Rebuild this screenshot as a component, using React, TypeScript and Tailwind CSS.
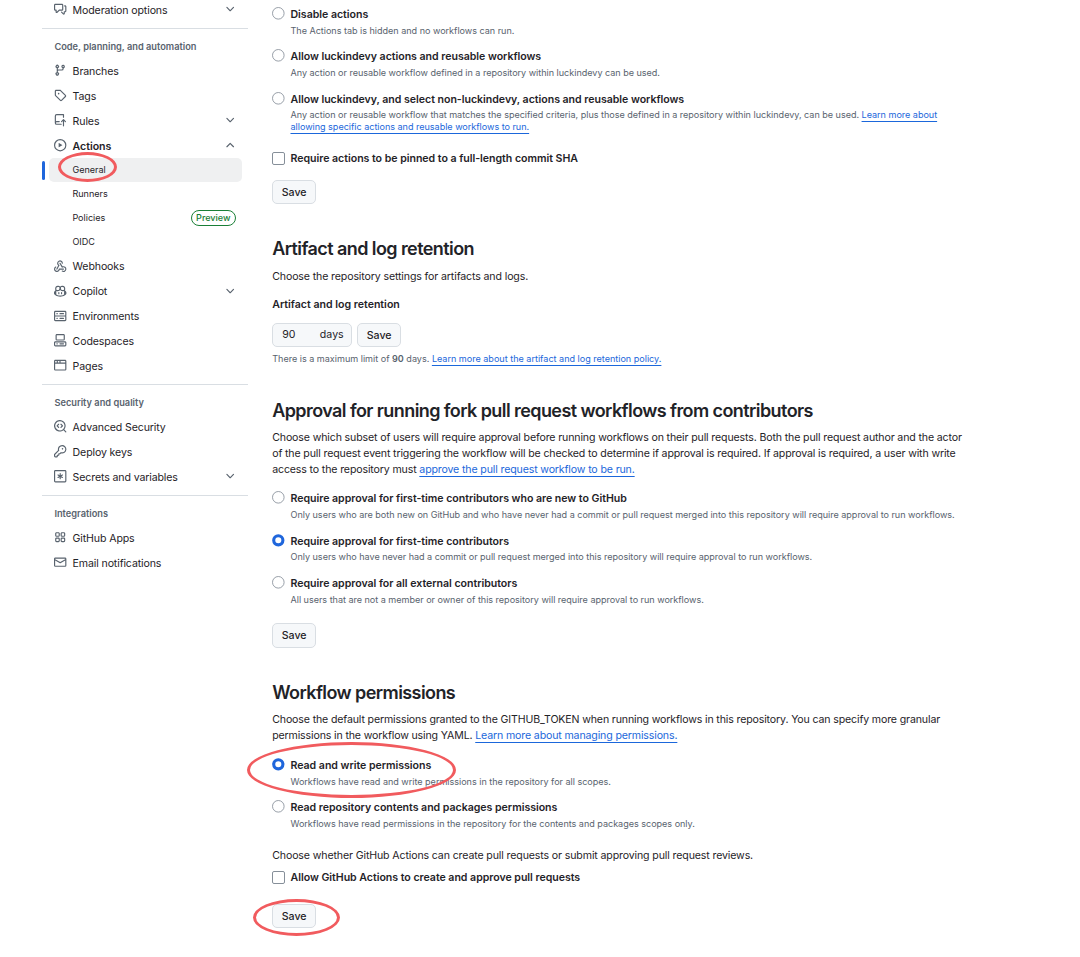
import type { ReactNode } from "react"

const icons = {
  discussion:
    "M1.75 1h8.5c.966 0 1.75.784 1.75 1.75v5.5A1.75 1.75 0 0 1 10.25 10H7.061l-2.574 2.573A1.458 1.458 0 0 1 2 11.543V10h-.25A1.75 1.75 0 0 1 0 8.25v-5.5C0 1.784.784 1 1.75 1ZM1.5 2.75v5.5c0 .138.112.25.25.25h1a.75.75 0 0 1 .75.75v2.19l2.72-2.72a.749.749 0 0 1 .53-.22h3.5a.25.25 0 0 0 .25-.25v-5.5a.25.25 0 0 0-.25-.25h-8.5a.25.25 0 0 0-.25.25Zm13 2a.25.25 0 0 0-.25-.25h-.5a.75.75 0 0 1 0-1.5h.5c.966 0 1.75.784 1.75 1.75v5.5A1.75 1.75 0 0 1 14.25 12H14v1.543a1.458 1.458 0 0 1-2.487 1.03L9.22 12.28a.749.749 0 0 1 .326-1.275.749.749 0 0 1 .734.215l2.22 2.22v-2.19a.75.75 0 0 1 .75-.75h1a.25.25 0 0 0 .25-.25Z",
  branch:
    "M9.5 3.25a2.25 2.25 0 1 1 3 2.122V6A2.5 2.5 0 0 1 10 8.5H6a1 1 0 0 0-1 1v1.128a2.251 2.251 0 1 1-1.5 0V5.372a2.25 2.25 0 1 1 1.5 0v1.836A2.493 2.493 0 0 1 6 7h4a1 1 0 0 0 1-1v-.628A2.25 2.25 0 0 1 9.5 3.25Zm-6 0a.75.75 0 1 0 1.5 0 .75.75 0 0 0-1.5 0Zm8.25-.75a.75.75 0 1 0 0 1.5.75.75 0 0 0 0-1.5ZM4.25 12a.75.75 0 1 0 0 1.5.75.75 0 0 0 0-1.5Z",
  tag: "M1 7.775V2.75C1 1.784 1.784 1 2.75 1h5.025c.464 0 .91.184 1.238.513l6.25 6.25a1.75 1.75 0 0 1 0 2.474l-5.026 5.026a1.75 1.75 0 0 1-2.474 0l-6.25-6.25A1.752 1.752 0 0 1 1 7.775Zm1.5 0c0 .066.026.13.073.177l6.25 6.25a.25.25 0 0 0 .354 0l5.025-5.025a.25.25 0 0 0 0-.354l-6.25-6.25a.25.25 0 0 0-.177-.073H2.75a.25.25 0 0 0-.25.25ZM6 5a1 1 0 1 1 0 2 1 1 0 0 1 0-2Z",
  repoPush:
    "M1 2.5A2.5 2.5 0 0 1 3.5 0h8.75a.75.75 0 0 1 .75.75v3.5a.75.75 0 0 1-1.5 0V1.5h-8a1 1 0 0 0-1 1v6.708A2.493 2.493 0 0 1 3.5 9h3.25a.75.75 0 0 1 0 1.5H3.5a1 1 0 0 0 0 2h5.75a.75.75 0 0 1 0 1.5H3.5A2.5 2.5 0 0 1 1 11.5ZM12.78 6.72l2.5 2.5a.75.75 0 0 1-1.06 1.06l-1.22-1.22v6.19a.75.75 0 0 1-1.5 0V9.06l-1.22 1.22a.75.75 0 0 1-1.06-1.06l2.5-2.5a.75.75 0 0 1 1.06 0Z",
  play: "M8 0a8 8 0 1 1 0 16A8 8 0 0 1 8 0ZM1.5 8a6.5 6.5 0 1 0 13 0 6.5 6.5 0 0 0-13 0Zm4.879-2.773 4.264 2.559a.25.25 0 0 1 0 .428l-4.264 2.559A.25.25 0 0 1 6 10.559V5.442a.25.25 0 0 1 .379-.215Z",
  webhook:
    "M5.5 4.25a2.25 2.25 0 0 1 4.5 0 .75.75 0 0 0 1.5 0 3.75 3.75 0 1 0-6.14 2.889l-2.272 4.258a.75.75 0 0 0 1.324.706L7 7.25a.75.75 0 0 0-.309-1.015A2.25 2.25 0 0 1 5.5 4.25ZM7.364 3.607a.75.75 0 0 1 1.03.257l2.608 4.349a3.75 3.75 0 1 1-.628 6.785.75.75 0 0 1 .752-1.299 2.25 2.25 0 1 0-.033-3.88.75.75 0 0 1-1.03-.256L7.107 4.636a.75.75 0 0 1 .257-1.03ZM2.9 8.776A.75.75 0 0 1 2.625 9.8 2.25 2.25 0 1 0 6 11.75a.75.75 0 0 1 .75-.751h5.5a.75.75 0 0 1 0 1.5H7.425a3.751 3.751 0 1 1-5.55-3.998.75.75 0 0 1 1.024.274Z",
  copilot:
    "M7.998 15.035c-4.562 0-7.873-2.914-7.998-3.749V9.338c.085-.628.677-1.686 1.588-2.065.013-.07.024-.143.036-.218.029-.183.06-.384.126-.612-.201-.508-.254-1.084-.254-1.656 0-.87.128-1.769.693-2.484.579-.733 1.494-1.124 2.724-1.261 1.206-.134 2.262.034 2.944.765.05.053.096.108.139.165.044-.057.094-.112.143-.165.682-.731 1.738-.899 2.944-.765 1.23.137 2.145.528 2.724 1.261.566.715.693 1.614.693 2.484 0 .572-.053 1.148-.254 1.656.066.228.098.429.126.612.012.076.024.148.037.218.924.385 1.522 1.471 1.591 2.095v1.872c0 .766-3.351 3.795-8.002 3.795Zm0-1.485c2.28 0 4.584-1.11 5.002-1.433V7.862l-.023-.116c-.49.21-1.075.291-1.727.291-1.146 0-2.059-.327-2.71-.991A3.222 3.222 0 0 1 8 6.303a3.24 3.24 0 0 1-.544.743c-.65.664-1.563.991-2.71.991-.652 0-1.236-.081-1.727-.291l-.023.116v4.255c.419.323 2.722 1.433 5.002 1.433ZM6.762 2.83c-.193-.206-.637-.413-1.682-.297-1.019.113-1.479.404-1.713.7-.247.312-.369.789-.369 1.554 0 .793.129 1.171.308 1.371.162.181.519.379 1.442.379.853 0 1.339-.235 1.638-.54.315-.322.527-.827.617-1.553.117-.935-.037-1.395-.241-1.614Zm4.155-.297c-1.044-.116-1.488.091-1.681.297-.204.219-.359.679-.242 1.614.091.726.303 1.231.618 1.553.299.305.784.54 1.638.54.922 0 1.28-.198 1.442-.379.179-.2.308-.578.308-1.371 0-.765-.123-1.242-.37-1.554-.233-.296-.693-.587-1.713-.7ZM6.25 9.037a.75.75 0 0 1 .75.75v1.501a.75.75 0 0 1-1.5 0V9.787a.75.75 0 0 1 .75-.75Zm4.25.75v1.501a.75.75 0 0 1-1.5 0V9.787a.75.75 0 0 1 1.5 0Z",
  server:
    "M1.75 1h12.5c.966 0 1.75.784 1.75 1.75v4c0 .372-.116.717-.314 1 .198.283.314.628.314 1v4a1.75 1.75 0 0 1-1.75 1.75H1.75A1.75 1.75 0 0 1 0 12.75v-4c0-.358.109-.707.314-1a1.739 1.739 0 0 1-.314-1v-4C0 1.784.784 1 1.75 1ZM1.5 2.75v4c0 .138.112.25.25.25h12.5a.25.25 0 0 0 .25-.25v-4a.25.25 0 0 0-.25-.25H1.75a.25.25 0 0 0-.25.25Zm.25 5.75a.25.25 0 0 0-.25.25v4c0 .138.112.25.25.25h12.5a.25.25 0 0 0 .25-.25v-4a.25.25 0 0 0-.25-.25ZM7 4.75A.75.75 0 0 1 7.75 4h4.5a.75.75 0 0 1 0 1.5h-4.5A.75.75 0 0 1 7 4.75ZM7.75 10h4.5a.75.75 0 0 1 0 1.5h-4.5a.75.75 0 0 1 0-1.5ZM3 4.75A.75.75 0 0 1 3.75 4h.5a.75.75 0 0 1 0 1.5h-.5A.75.75 0 0 1 3 4.75ZM3.75 10h.5a.75.75 0 0 1 0 1.5h-.5a.75.75 0 0 1 0-1.5Z",
  codespaces:
    "M0 11.25c0-.966.784-1.75 1.75-1.75h12.5c.966 0 1.75.784 1.75 1.75v3A1.75 1.75 0 0 1 14.25 16H1.75A1.75 1.75 0 0 1 0 14.25Zm2-9.5C2 .784 2.784 0 3.75 0h8.5C13.216 0 14 .784 14 1.75v5a1.75 1.75 0 0 1-1.75 1.75h-8.5A1.75 1.75 0 0 1 2 6.75Zm1.75-.25a.25.25 0 0 0-.25.25v5c0 .138.112.25.25.25h8.5a.25.25 0 0 0 .25-.25v-5a.25.25 0 0 0-.25-.25Zm-2 9.5a.25.25 0 0 0-.25.25v3c0 .138.112.25.25.25h12.5a.25.25 0 0 0 .25-.25v-3a.25.25 0 0 0-.25-.25ZM7 12.75a.75.75 0 0 1 .75-.75h4.5a.75.75 0 0 1 0 1.5h-4.5a.75.75 0 0 1-.75-.75Zm-4 0a.75.75 0 0 1 .75-.75h.5a.75.75 0 0 1 0 1.5h-.5a.75.75 0 0 1-.75-.75Z",
  browser:
    "M0 2.75C0 1.784.784 1 1.75 1h12.5c.966 0 1.75.784 1.75 1.75v10.5A1.75 1.75 0 0 1 14.25 15H1.75A1.75 1.75 0 0 1 0 13.25ZM14.5 6h-13v7.25c0 .138.112.25.25.25h12.5a.25.25 0 0 0 .25-.25Zm-6-3.5v2h6V2.75a.25.25 0 0 0-.25-.25ZM5 2.5v2h2v-2Zm-3.25 0a.25.25 0 0 0-.25.25V4.5h2v-2Z",
  codescan:
    "M8.47 4.97a.75.75 0 0 0 0 1.06L9.94 7.5 8.47 8.97a.75.75 0 1 0 1.06 1.06l2-2a.75.75 0 0 0 0-1.06l-2-2a.75.75 0 0 0-1.06 0ZM6.53 6.03a.75.75 0 0 0-1.06-1.06l-2 2a.75.75 0 0 0 0 1.06l2 2a.75.75 0 1 0 1.06-1.06L5.06 7.5l1.47-1.47ZM12.246 13.307a7.501 7.501 0 1 1 1.06-1.06l2.474 2.473a.749.749 0 0 1-.326 1.275.749.749 0 0 1-.734-.215ZM1.5 7.5a6.002 6.002 0 0 0 3.608 5.504 6.002 6.002 0 0 0 6.486-1.117.748.748 0 0 1 .292-.293A6 6 0 1 0 1.5 7.5Z",
  key: "M10.5 0a5.499 5.499 0 1 1-1.288 10.848l-.932.932a.749.749 0 0 1-.53.22H7v.75a.749.749 0 0 1-.22.53l-.5.5a.749.749 0 0 1-.53.22H5v.75a.749.749 0 0 1-.22.53l-.5.5a.749.749 0 0 1-.53.22h-2A1.75 1.75 0 0 1 0 14.25v-2c0-.199.079-.389.22-.53l4.932-4.932A5.5 5.5 0 0 1 10.5 0Zm-4 5.5c-.001.431.069.86.205 1.269a.75.75 0 0 1-.181.768L1.5 12.56v1.69c0 .138.112.25.25.25h1.69l.06-.06v-1.19a.75.75 0 0 1 .75-.75h1.19l.06-.06v-1.19a.75.75 0 0 1 .75-.75h1.19l1.023-1.025a.75.75 0 0 1 .768-.18A4 4 0 1 0 6.5 5.5ZM11 6a1 1 0 1 1 0-2 1 1 0 0 1 0 2Z",
  asterisk:
    "M1.75 0h12.5C15.216 0 16 .784 16 1.75v12.5A1.75 1.75 0 0 1 14.25 16H1.75A1.75 1.75 0 0 1 0 14.25V1.75C0 .784.784 0 1.75 0ZM1.5 1.75v12.5c0 .138.112.25.25.25h12.5a.25.25 0 0 0 .25-.25V1.75a.25.25 0 0 0-.25-.25H1.75a.25.25 0 0 0-.25.25ZM8 4a.75.75 0 0 1 .75.75V6.7l1.69-.975a.75.75 0 0 1 .75 1.3L9.5 8l1.69.975a.75.75 0 0 1-.75 1.3L8.75 9.3v1.951a.75.75 0 0 1-1.5 0V9.299l-1.69.976a.75.75 0 0 1-.75-1.3L6.5 8l-1.69-.975a.75.75 0 0 1 .75-1.3l1.69.976V4.75A.75.75 0 0 1 8 4Z",
  apps: "M1.5 3.25c0-.966.784-1.75 1.75-1.75h2.5c.966 0 1.75.784 1.75 1.75v2.5A1.75 1.75 0 0 1 5.75 7.5h-2.5A1.75 1.75 0 0 1 1.5 5.75ZM3.25 3a.25.25 0 0 0-.25.25v2.5c0 .138.112.25.25.25h2.5A.25.25 0 0 0 6 5.75v-2.5A.25.25 0 0 0 5.75 3ZM1.5 10.25c0-.966.784-1.75 1.75-1.75h2.5c.966 0 1.75.784 1.75 1.75v2.5a1.75 1.75 0 0 1-1.75 1.75h-2.5a1.75 1.75 0 0 1-1.75-1.75ZM3.25 10a.25.25 0 0 0-.25.25v2.5c0 .138.112.25.25.25h2.5a.25.25 0 0 0 .25-.25v-2.5a.25.25 0 0 0-.25-.25ZM8.5 3.25c0-.966.784-1.75 1.75-1.75h2.5c.966 0 1.75.784 1.75 1.75v2.5a1.75 1.75 0 0 1-1.75 1.75h-2.5A1.75 1.75 0 0 1 8.5 5.75ZM10.25 3a.25.25 0 0 0-.25.25v2.5c0 .138.112.25.25.25h2.5a.25.25 0 0 0 .25-.25v-2.5a.25.25 0 0 0-.25-.25ZM8.5 10.25c0-.966.784-1.75 1.75-1.75h2.5c.966 0 1.75.784 1.75 1.75v2.5a1.75 1.75 0 0 1-1.75 1.75h-2.5a1.75 1.75 0 0 1-1.75-1.75ZM10.25 10a.25.25 0 0 0-.25.25v2.5c0 .138.112.25.25.25h2.5a.25.25 0 0 0 .25-.25v-2.5a.25.25 0 0 0-.25-.25Z",
  mail: "M1.75 2h12.5c.966 0 1.75.784 1.75 1.75v8.5A1.75 1.75 0 0 1 14.25 14H1.75A1.75 1.75 0 0 1 0 12.25v-8.5C0 2.784.784 2 1.75 2ZM1.5 12.251c0 .138.112.25.25.25h12.5a.25.25 0 0 0 .25-.25V5.809L8.38 9.397a.75.75 0 0 1-.76 0L1.5 5.809v6.442Zm13-8.181v-.32a.25.25 0 0 0-.25-.25H1.75a.25.25 0 0 0-.25.25v.32L8 7.88Z",
  chevronDown:
    "M12.78 5.22a.749.749 0 0 1 0 1.06l-4.25 4.25a.749.749 0 0 1-1.06 0L3.22 6.28a.749.749 0 1 1 1.06-1.06L8 8.939l3.72-3.719a.749.749 0 0 1 1.06 0Z",
  chevronUp:
    "M3.22 10.53a.749.749 0 0 1 0-1.06l4.25-4.25a.749.749 0 0 1 1.06 0l4.25 4.25a.749.749 0 1 1-1.06 1.06L8 6.811 4.28 10.53a.749.749 0 0 1-1.06 0Z",
}

type IconName = keyof typeof icons

function Icon({ name }: { name: IconName }) {
  return (
    <svg viewBox="0 0 16 16" className="h-[12.4px] w-[12.4px] shrink-0 fill-[#59636e]">
      <path fillRule="evenodd" d={icons[name]} />
    </svg>
  )
}

function NavItem({ icon, label, chevron, bold }: { icon: IconName; label: string; chevron?: "up" | "down"; bold?: boolean }) {
  return (
    <a className="flex h-[24.9px] items-center pr-[12px] pb-[1px] pl-[12.4px]">
      <Icon name={icon} />
      <span className={`ml-[5.8px] flex-1 pt-[2.4px] text-[10.6px] ${bold ? "font-semibold tracking-[-0.03px]" : "tracking-[-0.13px]"}`}>
        {label}
      </span>
      {chevron && <Icon name={chevron === "up" ? "chevronUp" : "chevronDown"} />}
    </a>
  )
}

function NavHeading({ children }: { children: ReactNode }) {
  return (
    <h3 className="mt-[5.7px] flex h-[30.5px] items-center border-t border-[#d9dee3] pt-[6px] pl-[12.4px] text-[9.25px] font-semibold text-[#59636e]">
      {children}
    </h3>
  )
}

function SubItem({ label, children }: { label: string; children?: ReactNode }) {
  return (
    <a className="flex h-[23.95px] items-center justify-between pr-[12px] pl-[30.4px] text-[9.05px]">
      {label}
      {children}
    </a>
  )
}

function Link({ children }: { children: ReactNode }) {
  return <a className="text-[#1b67db] underline decoration-1 underline-offset-[2.5px]">{children}</a>
}

function Radio({ checked }: { checked?: boolean }) {
  return (
    <svg viewBox="0 0 13 13" className="mt-[1px] h-[13px] w-[13px] shrink-0">
      {checked ? (
        <circle cx="6.3" cy="6.3" r="4.6" fill="white" stroke="#1f66dc" strokeWidth="3.1" />
      ) : (
        <circle cx="6.3" cy="6.3" r="5.8" fill="white" stroke="#868f99" strokeWidth="0.85" />
      )}
    </svg>
  )
}

function Option({ label, note, checked, children }: { label: string; note: ReactNode; checked?: boolean; children?: ReactNode }) {
  return (
    <label className="relative mb-[11.5px] flex">
      <Radio checked={checked} />
      <span className="ml-[5.3px] flex flex-col">
        <span className="pt-[0.8px] text-[10.6px] leading-[16.3px] font-semibold tracking-[-0.03px]">{label}</span>
        <span className="mt-[1.6px] mb-[0.4px] text-[9.05px] leading-[11.7px] tracking-[-0.015px] text-[#59636e]">{note}</span>
      </span>
      {children}
    </label>
  )
}

function Check({ label }: { label: string }) {
  return (
    <label className="flex h-[16.3px] items-center text-[10.6px] font-semibold tracking-[-0.03px]">
      <span className="mr-[5.8px] h-[12.5px] w-[12.5px] shrink-0 rounded-[2px] border border-[#868f99]" />
      <span className="pt-[1.6px]">{label}</span>
    </label>
  )
}

function SaveButton() {
  return (
    <button className="h-[24.6px] w-[44px] rounded-[5px] border border-[#d9dee3] bg-[#f6f8fa] pt-[1.6px] text-[10.6px] font-medium tracking-[0]">
      Save
    </button>
  )
}

function Title({ children }: { children: ReactNode }) {
  return <h2 className="h-[28px] text-[18px] leading-[28px] font-semibold tracking-[-0.58px]">{children}</h2>
}

export default function App() {
  return (
    <div className="flex h-[957px] w-[1080px] overflow-hidden bg-white font-['Inter',sans-serif] whitespace-nowrap text-[#1f2328]">
      <nav className="ml-[42px] w-[206px] shrink-0">
        <div className="-mt-[2.4px]">
          <NavItem icon="discussion" label="Moderation options" chevron="down" />
        </div>
        <NavHeading>Code, planning, and automation</NavHeading>
        <NavItem icon="branch" label="Branches" />
        <NavItem icon="tag" label="Tags" />
        <NavItem icon="repoPush" label="Rules" chevron="down" />
        <NavItem icon="play" label="Actions" chevron="up" bold />
        <div className="relative flex h-[23.95px] items-center">
          <span className="h-[19px] w-[3px] rounded-full bg-[#1f66dc]" />
          <span className="ml-[4px] flex h-full w-[193px] items-center rounded-[5px] bg-[#eff0f1] pl-[23.4px] text-[9.05px]">
            General
          </span>
          <span className="absolute top-[-6px] left-[16px] h-[30px] w-[59px] rounded-[50%] border-[3px] border-[#f15b5e]" />
        </div>
        <SubItem label="Runners" />
        <SubItem label="Policies">
          <span className="flex h-[15.5px] items-center rounded-full border border-[#1a7f37] px-[4.5px] text-[9.05px] font-medium text-[#1a7f37]">
            Preview
          </span>
        </SubItem>
        <SubItem label="OIDC" />
        <NavItem icon="webhook" label="Webhooks" />
        <NavItem icon="copilot" label="Copilot" chevron="down" />
        <NavItem icon="server" label="Environments" />
        <NavItem icon="codespaces" label="Codespaces" />
        <NavItem icon="browser" label="Pages" />
        <NavHeading>Security and quality</NavHeading>
        <NavItem icon="codescan" label="Advanced Security" />
        <NavItem icon="key" label="Deploy keys" />
        <NavItem icon="asterisk" label="Secrets and variables" chevron="down" />
        <NavHeading>Integrations</NavHeading>
        <NavItem icon="apps" label="GitHub Apps" />
        <NavItem icon="mail" label="Email notifications" />
      </nav>

      <main className="ml-[24.2px] flex-1 text-[10.6px] leading-[16px] tracking-[-0.13px]">
        <section className="h-[234.5px] pt-[6.2px]">
          <Option label="Disable actions" note="The Actions tab is hidden and no workflows can run." />
          <Option
            label="Allow luckindevy actions and reusable workflows"
            note="Any action or reusable workflow defined in a repository within luckindevy can be used."
          />
          <Option
            label="Allow luckindevy, and select non-luckindevy, actions and reusable workflows"
            note={
              <>
                Any action or reusable workflow that matches the specified criteria, plus those defined in a repository within luckindevy, can be used.{" "}
                <Link>
                  Learn more about
                  <br />
                  allowing specific actions and reusable workflows to run.
                </Link>
              </>
            }
          />
          <div className="mt-[17.2px] mb-[12.8px]">
            <Check label="Require actions to be pinned to a full-length commit SHA" />
          </div>
          <SaveButton />
        </section>

        {/* Artifact and log retention */}
        <section className="h-[162px]">
          <Title>Artifact and log retention</Title>
          <p className="mt-[6px]">Choose the repository settings for artifacts and logs.</p>
          <p className="mt-[12px] font-semibold tracking-[0]">Artifact and log retention</p>
          <div className="mt-[10.1px] flex gap-[5px]">
            <div className="flex h-[24.6px] w-[80px] items-center justify-between rounded-[5px] border border-[#d9dee3] bg-[#f6f8fa] pt-[1px] pr-[7.5px] pl-[9px] tracking-[0]">
              <span>90</span>
              <span>days</span>
            </div>
            <SaveButton />
          </div>
          <p className="mt-[4px] text-[9.05px] tracking-[0] text-[#59636e]">
            There is a maximum limit of <b className="font-semibold">90</b> days.{" "}
            <Link>Learn more about the artifact and log retention policy.</Link>
          </p>
        </section>

        {/* Fork pull request approval */}
        <section className="h-[282px]">
          <Title>Approval for running fork pull request workflows from contributors</Title>
          <p className="mt-[5.2px] mb-[12.8px] tracking-[-0.14px]">
            Choose which subset of users will require approval before running workflows on their pull requests. Both the pull request author and the actor
            <br />
            of the pull request event triggering the workflow will be checked to determine if approval is required. If approval is required, a user with write
            <br />
            access to the repository must <Link>approve the pull request workflow to be run.</Link>
          </p>
          <Option
            label="Require approval for first-time contributors who are new to GitHub"
            note="Only users who are both new on GitHub and who have never had a commit or pull request merged into this repository will require approval to run workflows."
          />
          <Option
            checked
            label="Require approval for first-time contributors"
            note="Only users who have never had a commit or pull request merged into this repository will require approval to run workflows."
          />
          <Option
            label="Require approval for all external contributors"
            note="All users that are not a member or owner of this repository will require approval to run workflows."
          />
          <div className="mt-[17.5px]">
            <SaveButton />
          </div>
        </section>

        {/* Workflow permissions */}
        <section>
          <Title>Workflow permissions</Title>
          <p className="mt-[5.2px] mb-[13.2px] tracking-[-0.145px]">
            Choose the default permissions granted to the GITHUB_TOKEN when running workflows in this repository. You can specify more granular
            <br />
            permissions in the workflow using YAML. <Link>Learn more about managing permissions.</Link>
          </p>
          <Option checked label="Read and write permissions" note="Workflows have read and write permissions in the repository for all scopes.">
            <span className="absolute top-[-15px] left-[-25.2px] h-[56px] w-[209px] rounded-[50%] border-[3px] border-[#f15b5e]" />
          </Option>
          <Option
            label="Read repository contents and packages permissions"
            note="Workflows have read permissions in the repository for the contents and packages scopes only."
          />
          <p className="mt-[18px] mb-[5.6px]">Choose whether GitHub Actions can create pull requests or submit approving pull request reviews.</p>
          <Check label="Allow GitHub Actions to create and approve pull requests" />
          <div className="relative mt-[17.9px] w-fit">
            <SaveButton />
            <span className="absolute top-[-5px] left-[-19.2px] h-[37px] w-[87px] rounded-[50%] border-[3px] border-[#f15b5e]" />
          </div>
        </section>
      </main>
    </div>
  )
}
